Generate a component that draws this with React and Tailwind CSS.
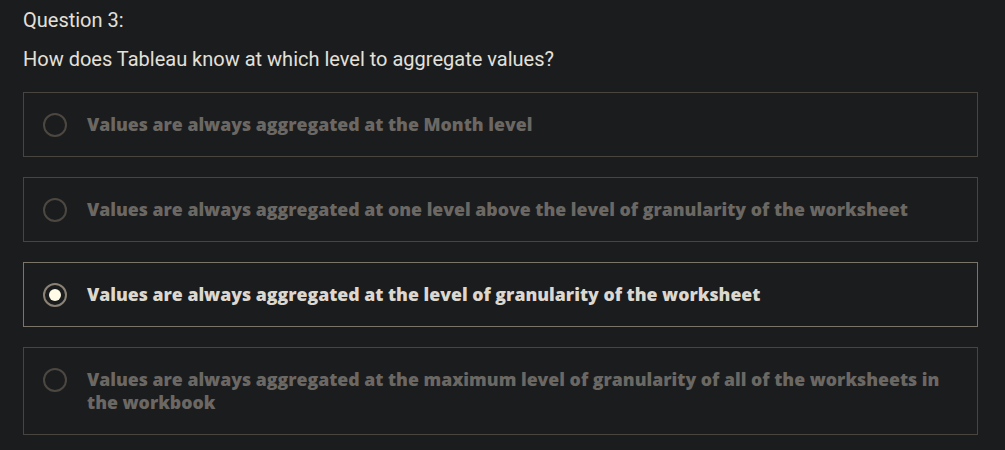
import React, { useState } from 'react';

const options = [
  'Values are always aggregated at the Month level',
  'Values are always aggregated at one level above the level of granularity of the worksheet',
  'Values are always aggregated at the level of granularity of the worksheet',
  'Values are always aggregated at the maximum level of granularity of all of the worksheets in the workbook',
];

const App = () => {
  const [selected, setSelected] = useState(2);

  return (
    <div className="min-h-[450px] bg-[#1b1c1e] px-[23px] pt-[8px] font-['Roboto',sans-serif]">
      <p className="text-[20px] leading-[24px] text-[#e3e0da]">Question 3:</p>
      <p className="mt-[15px] text-[20px] leading-[24px] text-[#e3e0da]">
        How does Tableau know at which level to aggregate values?
      </p>
      <div className="mt-[21px] flex w-[955px] flex-col gap-[20px]">
        {options.map((label, index) => {
          const isSelected = index === selected;
          return (
            <button
              key={label}
              type="button"
              onClick={() => setSelected(index)}
              className={`flex items-start gap-[20px] border py-[20px] pl-[19px] pr-[30px] text-left ${
                isSelected ? 'border-[#7b7468]' : 'border-[#48443f]'
              }`}
            >
              <span className="flex h-[23px] w-[24px] shrink-0 items-center">
                <span
                  className={`flex h-[24px] w-[24px] shrink-0 items-center justify-center rounded-full border-2 ${
                    isSelected ? 'border-[#8a8275]' : 'border-[#4c4841]'
                  }`}
                >
                  {isSelected ? <span className="h-[12px] w-[12px] rounded-full bg-[#fffbe6]" /> : null}
                </span>
              </span>
              <span
                className={`font-['Open_Sans',sans-serif] text-[17.7px] font-extrabold leading-[23px] ${
                  isSelected ? 'text-[#dcd8d0]' : 'text-[#6b6864]'
                }`}
              >
                {label}
              </span>
            </button>
          );
        })}
      </div>
    </div>
  );
};

export default App;
